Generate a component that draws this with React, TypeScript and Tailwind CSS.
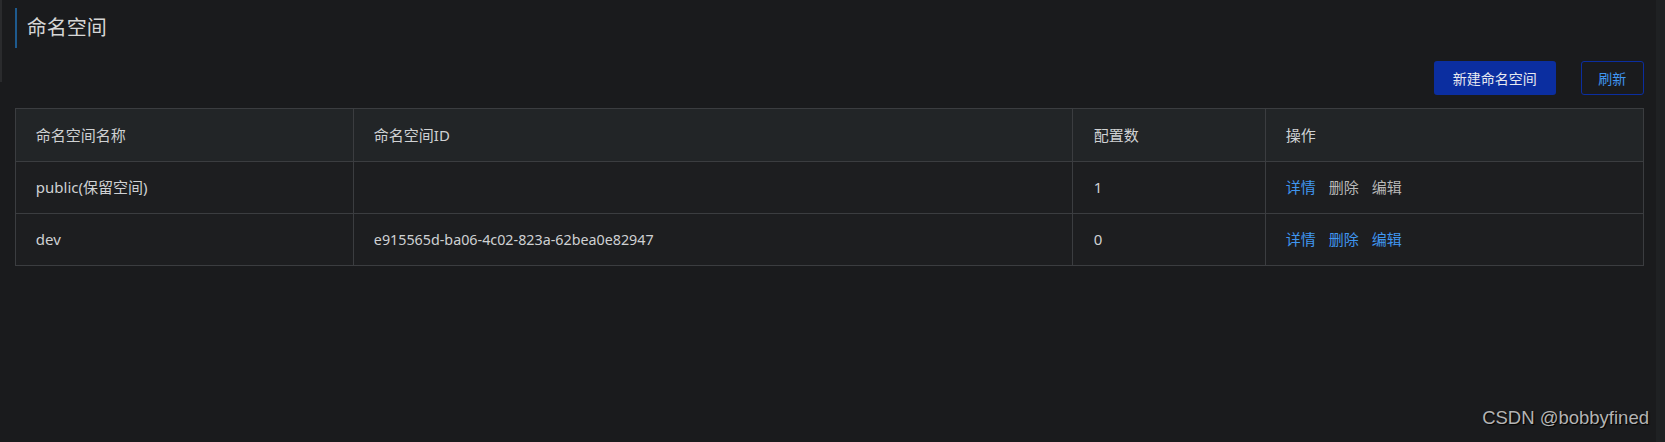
const rows = [
  { name: 'public(保留空间)', id: '', count: 1, locked: true },
  { name: 'dev', id: 'e915565d-ba06-4c02-823a-62bea0e82947', count: 0, locked: false },
];

export default function App() {
  return (
    <div
      className="relative flex h-[442px] w-[1665px] overflow-hidden bg-[#1a1b1d] text-[15px] text-[#cfd1d3]"
      style={{ fontFamily: '"Noto Sans", "Noto Sans CJK SC", sans-serif' }}
    >
      {/* left edge strip */}
      <div className="h-[82px] w-[2px] bg-[#2a2b2d]" />

      <div className="flex-1 pl-[13px] pr-[12px] pt-[8px]">
        {/* Title */}
        <div className="flex h-[40px] items-center border-l-2 border-[#1e5a8e] pl-[10px]">
          <span className="text-[20px] text-[#d6d6d6]">命名空间</span>
        </div>

        {/* Actions */}
        <div className="mt-[13px] flex justify-end gap-[25px]">
          <button className="h-[34px] w-[122px] rounded-[3px] bg-[#0b2ea0] text-[14px] text-[#e8eaf0]">
            新建命名空间
          </button>
          <button className="h-[34px] w-[63px] rounded-[3px] border border-[#0b2ea0] text-[14px] text-[#4096f0]">
            刷新
          </button>
        </div>

        {/* Table */}
        <table className="mt-[13px] w-[1628px] table-fixed border-collapse">
          <colgroup>
            <col className="w-[338px]" />
            <col className="w-[719px]" />
            <col className="w-[193px]" />
            <col className="w-[378px]" />
          </colgroup>
          <thead>
            <tr className="h-[53px] bg-[#222527] text-left">
              <th className="border border-[#3b3d40] pl-[20px] font-normal">命名空间名称</th>
              <th className="border border-[#3b3d40] pl-[20px] font-normal">命名空间ID</th>
              <th className="border border-[#3b3d40] pl-[21px] font-normal">配置数</th>
              <th className="border border-[#3b3d40] pl-[20px] font-normal">操作</th>
            </tr>
          </thead>
          <tbody>
            {rows.map((r) => (
              <tr key={r.name} className="h-[52px] bg-[#1d1e20]">
                <td className="border border-[#3b3d40] pl-[20px]">{r.name}</td>
                <td className="border border-[#3b3d40] pl-[20px] text-[14.3px]">{r.id}</td>
                <td className="border border-[#3b3d40] pl-[21px]">{r.count}</td>
                <td className="border border-[#3b3d40] pl-[20px]">
                  <div className="flex gap-[13px]">
                    <span className="text-[#4096f0]">详情</span>
                    <span className={r.locked ? 'text-[#b9b9b9]' : 'text-[#4096f0]'}>删除</span>
                    <span className={r.locked ? 'text-[#b9b9b9]' : 'text-[#4096f0]'}>编辑</span>
                  </div>
                </td>
              </tr>
            ))}
          </tbody>
        </table>
      </div>

      {/* right scrollbar strip */}
      <div className="w-[10px] bg-[#1f2123]" />

      {/* watermark */}
      <div
        className="absolute bottom-[10px] right-[16px] text-[18.5px] text-[#b4b4b4] [text-shadow:1px_1px_1px_#000]"
        style={{ fontFamily: '"Liberation Sans", Arial, sans-serif' }}
      >
        CSDN @bobbyfined
      </div>
    </div>
  );
}
